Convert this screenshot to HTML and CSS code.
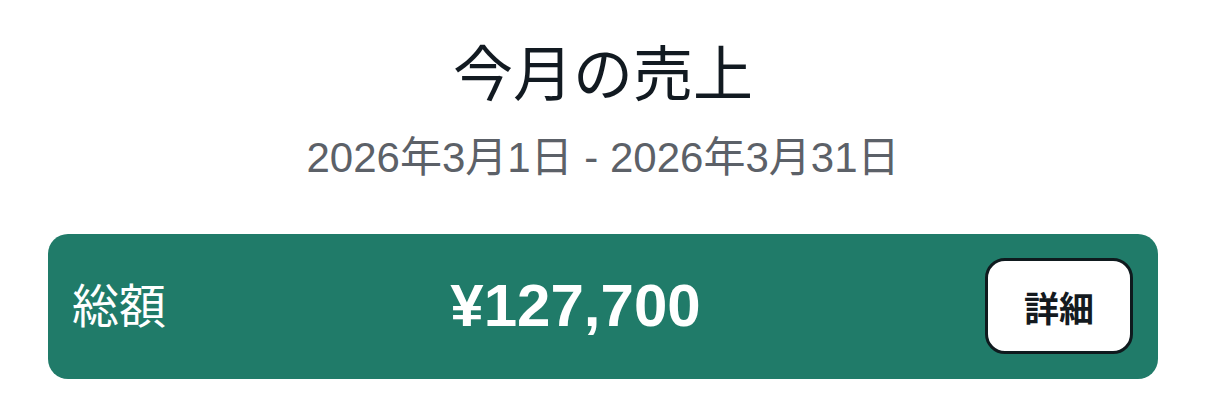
FILE: index.html
```html
<!DOCTYPE html>
<html lang="ja">
<head>
<meta charset="utf-8">
<link rel="stylesheet" href="styles.css">
</head>
<body>
<main class="page">
  <h1 class="title">今月の売上</h1>
  <p class="range">2026年3月1日 - 2026年3月31日</p>
  <section class="card">
    <span class="label">総額</span>
    <span class="amount">¥127,700</span>
    <button class="detail">詳細</button>
  </section>
</main>
</body>
</html>
```
FILE: styles.css
```css
* { box-sizing: border-box; }
html, body { margin: 0; padding: 0; background: #ffffff; }
body {
  font-family: "Liberation Sans", "Noto Sans CJK JP", sans-serif;
}
.page {
  padding: 40px 47px 0 48px;
  display: flex;
  flex-direction: column;
  align-items: stretch;
}
.title {
  margin: 0;
  text-align: center;
  font-size: 60px;
  line-height: 72px;
  font-weight: 400;
  color: #121a21;
}
.range {
  margin: 21px 0 0;
  text-align: center;
  font-size: 42px;
  line-height: 50px;
  color: #5c6168;
}
.card {
  margin-top: 51px;
  background: #207b69;
  border-radius: 20px;
  padding: 24px 25px 25px 24px;
  display: flex;
  align-items: center;
  justify-content: space-between;
  color: #ffffff;
}
.label {
  font-size: 47px;
  line-height: 1;
}
.amount {
  font-size: 60px;
  font-weight: 700;
  line-height: 1;
}
.detail {
  width: 148px;
  height: 96px;
  border: 3px solid #0f1a1e;
  border-radius: 20px;
  background: #ffffff;
  color: #141a1f;
  font-family: "Liberation Sans", "Noto Sans CJK JP", sans-serif;
  font-size: 35px;
  font-weight: 700;
  padding: 0;
}
```
